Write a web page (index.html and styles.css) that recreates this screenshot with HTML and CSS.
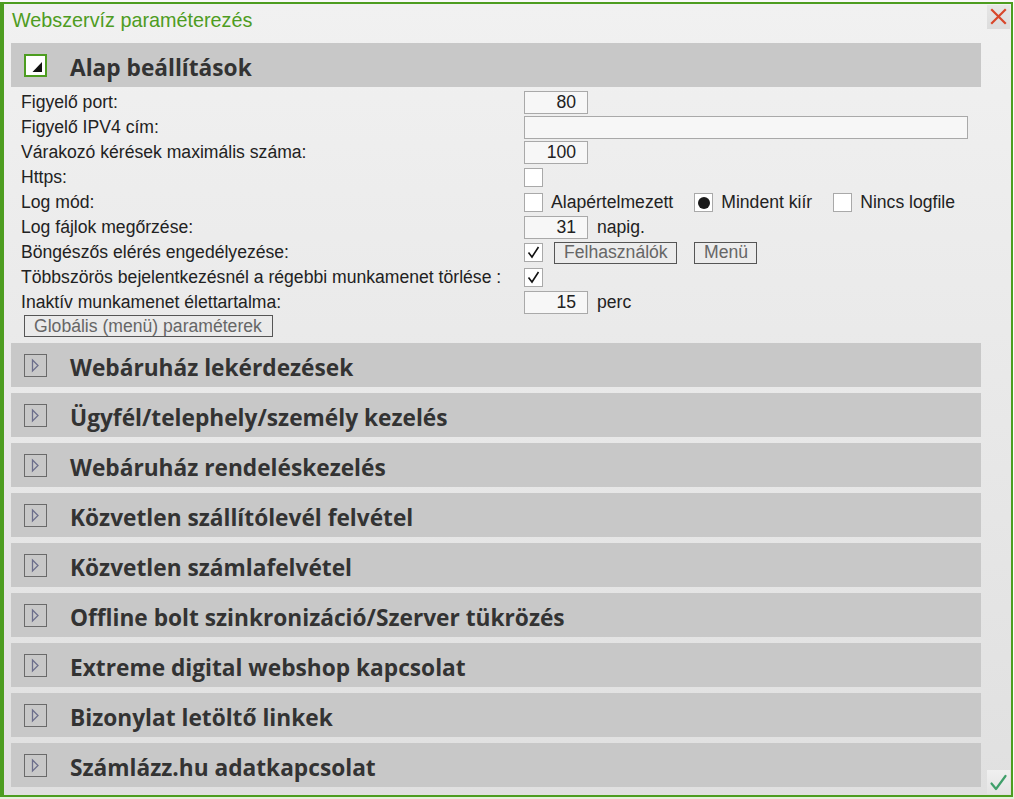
FILE: index.html
```html
<!DOCTYPE html>
<html lang="hu">
<head>
<meta charset="utf-8">
<title>Webszervíz paraméterezés</title>
<link rel="stylesheet" href="styles.css">
</head>
<body>
<div class="dialog">
  <div class="titlebar">
    <span class="title">Webszervíz paraméterezés</span>
    <span class="close-btn"><svg width="23" height="24" viewBox="0 0 23 24"><path d="M5 5 L18 18 M18 5 L5 18" stroke="#d8472b" stroke-width="2.2" stroke-linecap="square" fill="none"/></svg></span>
  </div>
  <div class="main">
    <div class="sections">
      <section class="sec">
        <div class="sec-head">
          <span class="toggle open"><svg width="19" height="19" viewBox="0 0 19 19"><polygon points="6.5,16 16,16 16,6" fill="#111"/></svg></span>
          <h2>Alap beállítások</h2>
        </div>
        <div class="sec-body">
          <div class="row"><span class="lbl">Figyelő port:</span><span class="ctl"><span class="inp num">80</span></span></div>
          <div class="row"><span class="lbl">Figyelő IPV4 cím:</span><span class="ctl"><span class="inp wide"></span></span></div>
          <div class="row"><span class="lbl">Várakozó kérések maximális száma:</span><span class="ctl"><span class="inp num">100</span></span></div>
          <div class="row"><span class="lbl">Https:</span><span class="ctl"><span class="cb"></span></span></div>
          <div class="row"><span class="lbl">Log mód:</span><span class="ctl">
            <span class="opt"><span class="cb"></span><span>Alapértelmezett</span></span>
            <span class="opt"><span class="cb radio"><span class="dot"></span></span><span>Mindent kiír</span></span>
            <span class="opt"><span class="cb"></span><span>Nincs logfile</span></span>
          </span></div>
          <div class="row"><span class="lbl">Log fájlok megőrzése:</span><span class="ctl"><span class="inp num">31</span><span class="unit">napig.</span></span></div>
          <div class="row"><span class="lbl">Böngészős elérés engedélyezése:</span><span class="ctl">
            <span class="cb"><svg width="17" height="17" viewBox="0 0 17 17"><path d="M3.5 8.5 L7 13 L13.5 3" stroke="#111" stroke-width="1.6" fill="none"/></svg></span>
            <span class="btn btn-users">Felhasználók</span>
            <span class="btn btn-menu">Menü</span>
          </span></div>
          <div class="row"><span class="lbl">Többszörös bejelentkezésnél a régebbi munkamenet törlése :</span><span class="ctl">
            <span class="cb"><svg width="17" height="17" viewBox="0 0 17 17"><path d="M3.5 8.5 L7 13 L13.5 3" stroke="#111" stroke-width="1.6" fill="none"/></svg></span>
          </span></div>
          <div class="row"><span class="lbl">Inaktív munkamenet élettartalma:</span><span class="ctl"><span class="inp num">15</span><span class="unit">perc</span></span></div>
          <div class="btn-row"><span class="btn">Globális (menü) paraméterek</span></div>
        </div>
      </section>
      <section class="sec"><div class="sec-head"><span class="toggle"><svg width="21" height="21" viewBox="0 0 21 21"><polygon points="7.5,5 13,10.5 7.5,16" fill="none" stroke="#6d6f8c" stroke-width="1.3"/></svg></span><h2>Webáruház lekérdezések</h2></div></section>
      <section class="sec"><div class="sec-head"><span class="toggle"><svg width="21" height="21" viewBox="0 0 21 21"><polygon points="7.5,5 13,10.5 7.5,16" fill="none" stroke="#6d6f8c" stroke-width="1.3"/></svg></span><h2>Ügyfél/telephely/személy kezelés</h2></div></section>
      <section class="sec"><div class="sec-head"><span class="toggle"><svg width="21" height="21" viewBox="0 0 21 21"><polygon points="7.5,5 13,10.5 7.5,16" fill="none" stroke="#6d6f8c" stroke-width="1.3"/></svg></span><h2>Webáruház rendeléskezelés</h2></div></section>
      <section class="sec"><div class="sec-head"><span class="toggle"><svg width="21" height="21" viewBox="0 0 21 21"><polygon points="7.5,5 13,10.5 7.5,16" fill="none" stroke="#6d6f8c" stroke-width="1.3"/></svg></span><h2>Közvetlen szállítólevél felvétel</h2></div></section>
      <section class="sec"><div class="sec-head"><span class="toggle"><svg width="21" height="21" viewBox="0 0 21 21"><polygon points="7.5,5 13,10.5 7.5,16" fill="none" stroke="#6d6f8c" stroke-width="1.3"/></svg></span><h2>Közvetlen számlafelvétel</h2></div></section>
      <section class="sec"><div class="sec-head"><span class="toggle"><svg width="21" height="21" viewBox="0 0 21 21"><polygon points="7.5,5 13,10.5 7.5,16" fill="none" stroke="#6d6f8c" stroke-width="1.3"/></svg></span><h2>Offline bolt szinkronizáció/Szerver tükrözés</h2></div></section>
      <section class="sec"><div class="sec-head"><span class="toggle"><svg width="21" height="21" viewBox="0 0 21 21"><polygon points="7.5,5 13,10.5 7.5,16" fill="none" stroke="#6d6f8c" stroke-width="1.3"/></svg></span><h2>Extreme digital webshop kapcsolat</h2></div></section>
      <section class="sec"><div class="sec-head"><span class="toggle"><svg width="21" height="21" viewBox="0 0 21 21"><polygon points="7.5,5 13,10.5 7.5,16" fill="none" stroke="#6d6f8c" stroke-width="1.3"/></svg></span><h2>Bizonylat letöltő linkek</h2></div></section>
      <section class="sec"><div class="sec-head"><span class="toggle"><svg width="21" height="21" viewBox="0 0 21 21"><polygon points="7.5,5 13,10.5 7.5,16" fill="none" stroke="#6d6f8c" stroke-width="1.3"/></svg></span><h2>Számlázz.hu adatkapcsolat</h2></div></section>
    </div>
    <div class="side">
      <span class="ok-btn"><svg width="23" height="24" viewBox="0 0 23 24"><path d="M4.5 13.5 L9 19 L18.5 6" stroke="#3f9f6a" stroke-width="2.2" fill="none" stroke-linecap="round" stroke-linejoin="round"/></svg></span>
    </div>
  </div>
</div>
</body>
</html>
```

FILE: styles.css
```css
html, body {
  margin: 0;
  padding: 0;
}
body {
  width: 1014px;
  height: 799px;
  padding-top: 2px;
  box-sizing: border-box;
  background: linear-gradient(to bottom, #fafafa 0, #fafafa 780px, #e4f2da 797px, #e4f2da 100%);
  font-family: "Liberation Sans", Arial, sans-serif;
  color: #222;
}
.dialog {
  width: 1013px;
  height: 795px;
  box-sizing: border-box;
  border: 2px solid #4d9d20;
  border-left-width: 4px;
  background: linear-gradient(to bottom, #f1f1f1, #e0e0e0);
  display: flex;
  flex-direction: column;
}
.titlebar {
  height: 39px;
  display: flex;
  justify-content: space-between;
  align-items: flex-start;
  padding-left: 8px;
  padding-right: 1px;
}
.title {
  font-size: 19.8px;
  line-height: 24px;
  margin-top: 4px;
  color: #4e9c22;
}
.close-btn {
  width: 23px;
  height: 24px;
  margin-top: 1px;
  background: linear-gradient(to bottom, #e6e6e6, #dcdcdc);
  display: flex;
}
.main {
  flex: 1;
  display: flex;
  gap: 6px;
  padding-left: 7px;
  padding-right: 1px;
}
.sections {
  width: 970px;
  display: flex;
  flex-direction: column;
  gap: 6px;
}
.sec-head {
  height: 44px;
  background: #c8c8c8;
  display: flex;
  align-items: center;
  padding-left: 13px;
}
.sec-head h2 {
  margin: 5px 0 0 23px;
  font-family: "Open Sans", "Noto Sans", sans-serif;
  font-weight: 700;
  font-size: 22.7px;
  line-height: 30px;
  color: #333;
}
.toggle {
  width: 23px;
  height: 23px;
  box-sizing: border-box;
  border: 1px solid #6a6a6a;
  display: flex;
  align-items: center;
  justify-content: center;
}
.toggle.open {
  border: 2px solid #4d9d20;
  background: #fff;
}
.sec-body {
  padding: 3px 0 0 10px;
  font-size: 17.6px;
}
.row {
  height: 25px;
  display: flex;
  align-items: center;
}
.lbl {
  width: 503px;
  flex: none;
  white-space: nowrap;
}
.ctl {
  display: flex;
  align-items: center;
}
.inp {
  height: 23px;
  box-sizing: border-box;
  border: 1px solid #a9a9a9;
  background: #f7f7f7;
  display: inline-flex;
  align-items: center;
  justify-content: flex-end;
  padding-right: 11px;
  color: #222;
}
.inp.num { width: 64px; }
.inp.wide { width: 444px; }
.unit { margin-left: 9px; }
.cb {
  width: 19px;
  height: 19px;
  box-sizing: border-box;
  border: 1px solid #a9a9a9;
  background: #fff;
  display: inline-flex;
  align-items: center;
  justify-content: center;
  flex: none;
}
.dot {
  width: 12px;
  height: 12px;
  border-radius: 50%;
  background: #1a1a1a;
}
.opt {
  display: flex;
  align-items: center;
  gap: 8px;
  margin-right: 21px;
  white-space: nowrap;
}
.btn {
  display: inline-flex;
  align-items: center;
  height: 22px;
  box-sizing: border-box;
  border: 1px solid #555;
  padding: 0 9px;
  color: #666;
  white-space: nowrap;
}
.btn-users { margin-left: 11px; width: 123px; }
.btn-menu { margin-left: 17px; width: 63px; }
.btn-row {
  display: flex;
  padding-left: 3px;
}
.btn-row .btn { width: 249px; }
.side {
  width: 23px;
  display: flex;
  align-items: flex-end;
  padding-bottom: 1px;
}
.ok-btn {
  width: 23px;
  height: 24px;
  background: linear-gradient(to bottom, #f0f0f0, #e4e4e4);
  display: flex;
}
```
